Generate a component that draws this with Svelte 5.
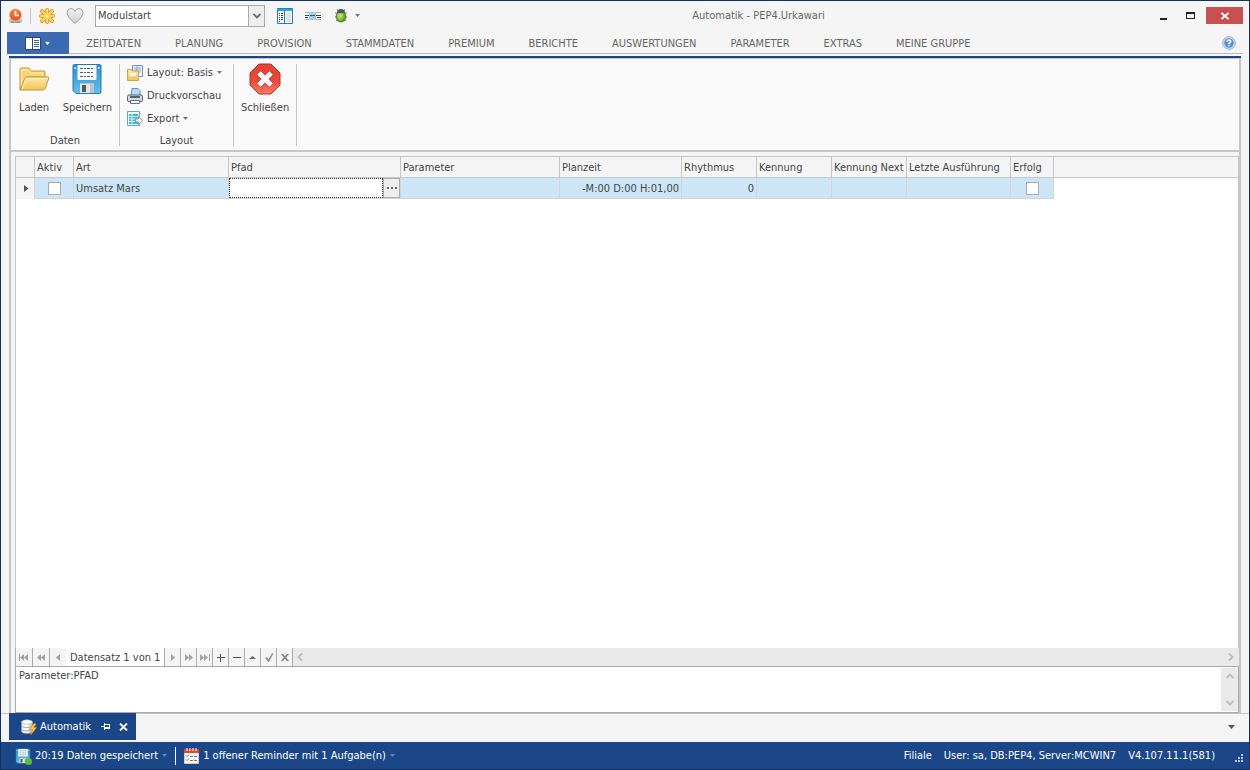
<script>
  const tabs = ['ZEITDATEN', 'PLANUNG', 'PROVISION', 'STAMMDATEN', 'PREMIUM', 'BERICHTE', 'AUSWERTUNGEN', 'PARAMETER', 'EXTRAS', 'MEINE GRUPPE'];
  const columns = [
    { title: 'Aktiv', width: 39 },
    { title: 'Art', width: 155 },
    { title: 'Pfad', width: 172 },
    { title: 'Parameter', width: 159 },
    { title: 'Planzeit', width: 122 },
    { title: 'Rhythmus', width: 75 },
    { title: 'Kennung', width: 75 },
    { title: 'Kennung Next', width: 75 },
    { title: 'Letzte Ausführung', width: 104 },
    { title: 'Erfolg', width: 43 }
  ];
  const before = [
    { label: 'Erster', d: 'M0 1h1v7H0zM5 1v7L1 4.500zM9 1v7L5 4.500z' },
    { label: 'Seite zurück', d: 'M5 1v7L1 4.500zM9 1v7L5 4.500z' },
    { label: 'Zurück', d: 'M7 1v7L3 4.500z' }
  ];
  const after = [
    { label: 'Weiter', d: 'M3 1v7l4-3.500z' },
    { label: 'Seite vor', d: 'M1 1v7l4-3.500zM5 1v7l4-3.500z' },
    { label: 'Letzter', d: 'M0 1v7l4-3.500zM4 1v7l4-3.500zM9 1h1v7H9z' },
    { label: 'Hinzufügen', d: 'M4 1h1v3h4v1H5v4H4V5H1V4h3z', fill: '#555' },
    { label: 'Löschen', d: 'M1 4h8v1H1z', fill: '#555' },
    { label: 'Bearbeiten', d: 'M1 6h7L4.500 3z', fill: '#666' },
    { label: 'Übernehmen', d: 'M1 5l2-1 1.500 2L8 0l1.500.5L5 9H4z', fill: '#999' },
    { label: 'Verwerfen', d: 'M1 1h2l2 2.200L7 1h2L6.200 4.500 9 8H7L5 5.800 3 8H1l2.800-3.500z', fill: '#858585' }
  ];
  let active = $state(false);
  let success = $state(false);
  let path = $state('');
</script>

{#snippet arrow()}
  <svg class="arrow" width="5" height="3" viewBox="0 0 5 3" aria-hidden="true"><path d="M0 0h5L2.500 3z" fill="currentColor" /></svg>
{/snippet}

{#snippet floppy(size)}
  <svg width={size} height={size} viewBox="0 0 32 32" aria-hidden="true">
    <path d="M2 3q0-1.500 1.500-1.500h25Q30 1.500 30 3v26q0 1.500-1.500 1.500H5l-3-3z" fill="url(#disk)" stroke="#2479ae" />
    <path d="M6.500 2h19v14q0 1-1 1h-17q-1 0-1-1z" fill="#f7f9fa" />
    <path d="M3.500 4h1.500v2H3.500zM27 4h1.500v2H27z" fill="#dff2fc" />
    <path d="M9 5.500h14M9 9.500h14M9 13.500h14" stroke="#56646d" stroke-dasharray="3 1 2 1" />
    <path d="M9 20.500h14V30H9z" fill="#dfe5e9" />
    <path d="M11 22h4v7h-4z" fill="#4e5a66" />
    <path d="M19 20.500h4V30h-4z" fill="#b9c6ce" />
  </svg>
{/snippet}

<svg class="defs" width="0" height="0" aria-hidden="true">
  <defs>
    <linearGradient id="disk" x1="0" y1="0" x2="0" y2="1"><stop offset="0" stop-color="#2f8fc9" /><stop offset="1" stop-color="#62c0ec" /></linearGradient>
    <linearGradient id="folder" x1="0" y1="0" x2="0" y2="1"><stop offset="0" stop-color="#ffeaa5" /><stop offset="1" stop-color="#f0c45c" /></linearGradient>
    <linearGradient id="stop" x1="0" y1="0" x2="0" y2="1"><stop offset="0" stop-color="#e04434" /><stop offset=".55" stop-color="#e64a38" /><stop offset="1" stop-color="#ff7a68" /></linearGradient>
    <linearGradient id="heart" x1="0" y1="0" x2="0" y2="1"><stop offset="0" stop-color="#f4f4f4" /><stop offset="1" stop-color="#cdcdcd" /></linearGradient>
    <linearGradient id="silver" x1="0" y1="0" x2="1" y2="0"><stop offset="0" stop-color="#e9edf0" /><stop offset=".5" stop-color="#fff" /><stop offset="1" stop-color="#aeb9c2" /></linearGradient>
    <radialGradient id="bug" cx=".4" cy=".45"><stop offset="0" stop-color="#d3f07a" /><stop offset="1" stop-color="#6aa31c" /></radialGradient>
    <radialGradient id="clock" cx=".5" cy=".35"><stop offset="0" stop-color="#ff8c45" /><stop offset="1" stop-color="#e0571c" /></radialGradient>
  </defs>
</svg>

<div class="window">
  <header class="titlebar">
    <div class="quick">
      <button class="tool" aria-label="Anwendung">
        <svg width="16" height="16" viewBox="0 0 16 16"><path d="M1 11h13v3q0 1-1 1H2q-1 0-1-1z" fill="#c4c4c4" /><path d="M3 13.500h9v1H3z" fill="#777" /><circle cx="7.500" cy="7" r="6" fill="url(#clock)" stroke="#e8b59a" /><path d="M7.500 3v4.500H11" fill="none" stroke="#fff" stroke-width="1.600" /></svg>
      </button>
      <span class="split"></span>
      <button class="tool" aria-label="Neu">
        <svg width="18" height="18" viewBox="0 0 18 18"><g stroke-linecap="round"><path d="M9 3v12M3 9h12M4 4l10 10M14 4L4 14" stroke="#dc982b" stroke-width="4" /><path d="M9 3v12M3 9h12M4 4l10 10M14 4L4 14" stroke="#ffd268" stroke-width="2.400" /></g><circle cx="9" cy="9" r="1.500" fill="#fff0a9" /></svg>
      </button>
      <button class="tool" aria-label="Favorit">
        <svg width="18" height="18" viewBox="0 0 18 18"><path d="M9 16.500Q1 10 1 5.500Q1.200 1.500 5 1.500Q8 1.500 9 4.500Q10 1.500 13 1.500Q16.800 1.500 17 5.500Q17 10 9 16.500z" fill="url(#heart)" stroke="#a6a6a6" /></svg>
      </button>
      <div class="combo">
        <select aria-label="Modul"><option>Modulstart</option></select>
        <span class="drop"><svg width="8" height="6" viewBox="0 0 8 6"><path d="M.5 1L4 4.500 7.500 1" fill="none" stroke="#6b6b6b" stroke-width="1.800" /></svg></span>
      </div>
      <button class="tool" aria-label="Ansicht">
        <svg width="16" height="16" viewBox="0 0 16 16"><path d="M.5.5h15v15H.5z" fill="#fff" stroke="#1782c0" /><path d="M1 1h14v2H1z" fill="#36a2dc" /><path d="M2 5h1v1H2zM2 7h1v1H2zM2 9h1v1H2zM2 11h1v1H2zM2 13h1v1H2zM4 5h2v1H4zM4 7h2v1H4zM4 9h2v1H4zM4 11h2v1H4z" fill="#444" /><path d="M7 3h1v12H7z" fill="#1782c0" /><path d="M9 5h5v9H9z" fill="#e2e2e2" /></svg>
      </button>
      <button class="tool" aria-label="Trennen">
        <svg width="16" height="8" viewBox="0 0 16 8"><path d="M0 0h16v1H0zM0 7h16v1H0z" fill="#b5b5b5" /><path d="M4 0h7v8H4z" fill="#a5cbe4" /><path d="M0 3h4v1H0zM11 3h5v1h-5zM0 5h3v1H0zM12 5h4v1h-4z" fill="#444" /><path d="M5 3h5v1H5z" fill="#28577a" /></svg>
      </button>
      <button class="tool bug" aria-label="Debug">
        <svg width="12" height="15" viewBox="0 0 12 15"><path d="M0 5h12M0 9h12M1 12.500h10M2 1l2 3M10 1L8 4" stroke="#65734c" stroke-width=".8" /><ellipse cx="6" cy="8.500" rx="4.800" ry="5.500" fill="url(#bug)" stroke="#426a13" stroke-width=".8" /><path d="M2 5Q2 1 6 1t4 4z" fill="#475675" /></svg>
        {@render arrow()}
      </button>
    </div>
    <h1>Automatik - PEP4.Urkawari</h1>
    <div class="controls">
      <button aria-label="Minimieren"><svg width="9" height="9" viewBox="0 0 9 9"><path d="M1 7h7v2H1z" fill="#222" /></svg></button>
      <button aria-label="Maximieren"><svg width="9" height="9" viewBox="0 0 9 9"><path d="M0 1h9v7H0zM1 3v4h7V3z" fill="#222" fill-rule="evenodd" /></svg></button>
      <button class="close" aria-label="Fenster schließen"><svg width="8" height="8" viewBox="0 0 8 8"><path d="M.5 1l7 6M7.500 1l-7 6" stroke="#fff" stroke-width="1.800" /></svg></button>
    </div>
  </header>

  <nav class="tabs">
    <button class="file" aria-label="Datei">
      <svg width="16" height="13" viewBox="0 0 16 13"><path d="M.5.5h15v12H.5z" fill="#fff" stroke="#24457e" /><path d="M7 1h1v11H7z" fill="#24457e" /><path d="M9 3h5v1H9zM9 5h5v1H9zM9 7h5v1H9zM9 9h5v1H9z" fill="#4a5f86" /></svg>
      <svg width="7" height="5" viewBox="0 0 7 5"><path d="M.5.5h6L3.500 4.500z" fill="#fff" stroke="#24457e" stroke-width=".5" /></svg>
    </button>
    {#each tabs as tab}<button class="tab">{tab}</button>{/each}
    <button class="help" aria-label="Hilfe">
      <svg width="14" height="14" viewBox="0 0 14 14"><circle cx="7" cy="7" r="6.300" fill="#dbe7f5" stroke="#8fabd0" /><circle cx="7" cy="7" r="4.800" fill="#5d8fce" /><path d="M5.200 5.800Q5.200 4 7 4t1.800 1.600Q8.800 6.600 7 7.500v.8M7 9v1.300" fill="none" stroke="#fff" stroke-width="1.400" /></svg>
    </button>
  </nav>

  <div class="shell">
    <section class="ribbon">
      <div class="group data">
        <div class="items">
          <button class="big">
            <svg width="32" height="32" viewBox="0 0 32 32"><path d="M2 27V6q0-1 1-1h8l2 3h13q1 0 1 1v5H9z" fill="#f7d47b" stroke="#c99632" /><path d="M3.500 24V7h7l2 3h12v3" fill="none" stroke="#fff0bd" /><path d="M2 27l5-12q.5-1 1.500-1H30q1.200 0 .8 1L27 26q-.5 1-1.500 1z" fill="url(#folder)" stroke="#c99632" /><path d="M4 26l4.200-10.500H30" fill="none" stroke="#fff3c8" /></svg>
            <span>Laden</span>
          </button>
          <button class="big">
            {@render floppy(32)}
            <span>Speichern</span>
          </button>
        </div>
        <h2>Daten</h2>
      </div>
      <div class="group layout">
        <div class="stack">
          <button>
            <svg width="16" height="16" viewBox="0 0 16 16"><path d="M5.500.5h10v11h-10z" fill="#edf4fb" stroke="#7496bd" /><path d="M7 3h7M7 5h7M7 7h7M10 1v10" stroke="#8cabd0" /><path d="M.5 15.500v-11h4l1 1.500h6v9.500z" fill="url(#folder)" stroke="#d2a344" /><path d="M3 8h6v3H3z" fill="#fff" /></svg>
            <span>Layout: Basis</span>{@render arrow()}
          </button>
          <button>
            <svg width="16" height="16" viewBox="0 0 16 16"><path d="M4 8L5 .5h6l2 2V8z" fill="#b8daf7" stroke="#5d8fc2" /><path d="M.5 8.500q0-1.500 1.500-1.500h12q1.500 0 1.500 1.500v4q0 1-1 1h-13q-1 0-1-1z" fill="#d5dae0" stroke="#56606c" /><path d="M3 8h10v2H3z" fill="#59626e" /><path d="M3.500 12.500h9v3h-9z" fill="#fff" stroke="#68727e" /></svg>
            <span>Druckvorschau</span>
          </button>
          <button>
            <svg width="16" height="16" viewBox="0 0 16 16"><path d="M.5.5h12v14H.5z" fill="#f5fcff" stroke="#67a8b8" /><path d="M2 3h9v10H2z" fill="#38b5e5" /><path d="M2 5.500h9M2 8h9M2 10.500h9M5 3v10" stroke="#d8f4ff" /><path d="M8.500 8h3V5.500L15.500 9.500l-4 4V11h-3z" fill="#f5f5f5" stroke="#8d9a9d" /></svg>
            <span>Export</span>{@render arrow()}
          </button>
        </div>
        <h2>Layout</h2>
      </div>
      <div class="group">
        <div class="items">
          <button class="big">
            <svg width="32" height="32" viewBox="0 0 32 32"><path d="M10 1h12l9 9v12l-9 9H10l-9-9V10z" fill="url(#stop)" stroke="#b43428" /><path d="M10 10l12 12m0-12L10 22" stroke="#b8382b" stroke-width="6.500" /><path d="M10 10l12 12m0-12L10 22" stroke="#fff" stroke-width="5" /></svg>
            <span>Schließen</span>
          </button>
        </div>
      </div>
    </section>

    <main>
      <div class="grid">
        <table>
          <colgroup>
            <col style="width:19px" />
            {#each columns as column}<col style="width:{column.width}px" />{/each}
            <col />
          </colgroup>
          <thead>
            <tr><th></th>{#each columns as column}<th>{column.title}</th>{/each}<th></th></tr>
          </thead>
          <tbody>
            <tr>
              <td class="marker"><svg width="5" height="7" viewBox="0 0 5 7"><path d="M0 0v7l4.500-3.500z" fill="#555" /></svg></td>
              <td class="check"><input type="checkbox" aria-label="Aktiv" bind:checked={active} /></td>
              <td>Umsatz Mars</td>
              <td class="editor"><div class="edit"><input type="text" aria-label="Pfad" bind:value={path} /><button aria-label="Pfad wählen"><svg width="10" height="2" viewBox="0 0 10 2"><path d="M0 0h2v2H0zM4 0h2v2H4zM8 0h2v2H8z" fill="#666" /></svg></button></div></td>
              <td></td>
              <td class="number">-M:00 D:00 H:01,00</td>
              <td class="number">0</td>
              <td></td><td></td><td></td>
              <td class="check"><input type="checkbox" aria-label="Erfolg" bind:checked={success} /></td>
              <td class="rest"></td>
            </tr>
          </tbody>
        </table>
      </div>
      <div class="navigator">
        {#each before as item}
          <button aria-label={item.label}><svg width="10" height="9" viewBox="0 0 10 9"><path d={item.d} fill="#a3a3a3" /></svg></button>
        {/each}
        <span class="record">Datensatz 1 von 1</span>
        {#each after as item}
          <button class="next" aria-label={item.label}><svg width="10" height="9" viewBox="0 0 10 9"><path d={item.d} fill={item.fill ?? '#a3a3a3'} /></svg></button>
        {/each}
        <div class="scroll">
          <svg width="6" height="8" viewBox="0 0 6 8"><path d="M5 .5L1.500 4 5 7.500" /></svg>
          <svg width="6" height="8" viewBox="0 0 6 8"><path d="M1 .5L4.500 4 1 7.500" /></svg>
        </div>
      </div>
      <div class="memo">
        <p>Parameter:PFAD</p>
        <div class="vscroll">
          <svg width="8" height="6" viewBox="0 0 8 6"><path d="M.5 5L4 1.500 7.500 5" /></svg>
          <svg width="8" height="6" viewBox="0 0 8 6"><path d="M.5 1L4 4.500 7.500 1" /></svg>
        </div>
      </div>
    </main>
  </div>

  <div class="documents">
    <div class="document">
      <svg width="16" height="16" viewBox="0 0 16 16"><path d="M.5 3v9q0 2.500 5.500 2.500t5.500-2.500V3z" fill="url(#silver)" stroke="#8a98a8" stroke-width=".6" /><ellipse cx="6" cy="3" rx="5.500" ry="2.200" fill="#fff" stroke="#9ca9b6" stroke-width=".6" /><path d="M.5 6.500Q1 8.500 6 8.500t5.500-2M.5 10Q1 12 6 12t5.500-2" fill="none" stroke="#a0adb9" /><path d="M13 4.500l-4.500 6h3L10 15.500l5.500-7h-3L15 5z" fill="#ffd43c" stroke="#e88916" stroke-width=".8" /></svg>
      <span>Automatik</span>
      <button class="pin" aria-label="Anheften"><svg width="9" height="7" viewBox="0 0 9 7"><path d="M0 3h3V0h1v1h5v5H4v1H3V4H0zM4 2v2h4V2z" fill="#fff" fill-rule="evenodd" /></svg></button>
      <button aria-label="Schließen"><svg width="9" height="8" viewBox="0 0 9 8"><path d="M1 .5l7 7M8 .5l-7 7" stroke="#fff" stroke-width="1.800" /></svg></button>
    </div>
    <button aria-label="Fensterliste"><svg width="7" height="4" viewBox="0 0 7 4"><path d="M0 0h7L3.500 4z" fill="#555" /></svg></button>
  </div>

  <footer>
    <button class="saved">
      <span class="saveicon">{@render floppy(16)}<i></i></span>
      <span>20:19 Daten gespeichert</span>{@render arrow()}
    </button>
    <button class="reminder">
      <svg width="15" height="16" viewBox="0 0 15 16"><path d="M.5 1.500h14v14H.5z" fill="#fafafa" stroke="#ccc" /><path d="M0 1h15v4H0z" fill="#d84a35" /><path d="M3 0v3M6 0v3M9 0v3M12 0v3" stroke="#fff" /><path d="M2 7.500l1 1 2-2M2 11.500l1 1 2-2" fill="none" stroke="#5b9b30" /><path d="M6 8.500h3M10 8.500h3M6 12.500h3M10 12.500h3" stroke="#777" /></svg>
      <span>1 offener Reminder mit 1 Aufgabe(n)</span>{@render arrow()}
    </button>
    <div class="info"><span>Filiale</span><span>User: sa, DB:PEP4, Server:MCWIN7</span><span>V4.107.11.1(581)</span></div>
    <svg class="grip" width="8" height="8" viewBox="0 0 8 8" aria-hidden="true"><path d="M6 0h2v2H6zM3 3h2v2H3zM6 3h2v2H6zM0 6h2v2H0zM3 6h2v2H3zM6 6h2v2H6z" fill="#b8c7dd" /></svg>
  </footer>
</div>

<style>
  :global(body) { margin: 0; }
  .window, .window * { box-sizing: border-box; }
  .window {
    display: flex;
    flex-direction: column;
    min-height: 100vh;
    border: 1px solid #14305f;
    background: #f5f5f5;
    color: #444;
    font: 11px/14px "DejaVu Sans Condensed", "Noto Sans", sans-serif;
  }
  svg { display: block; flex: none; }
  .defs { position: absolute; }
  button { display: flex; align-items: center; padding: 0; border: 0; background: none; color: inherit; font: inherit; white-space: nowrap; }
  h1, h2, p { margin: 0; font: inherit; }

  .titlebar { display: flex; align-items: center; height: 31px; padding: 0 6px 2px 5px; }
  .quick { display: flex; align-items: center; }
  .tool { justify-content: center; width: 28px; height: 24px; }
  .tool:first-child { width: 20px; }
  .split { width: 1px; height: 16px; margin: 0 2px 0 4px; background: #c6c6c6; }
  .combo { display: flex; width: 170px; height: 22px; margin: 0 6px; border: 1px solid #ababab; background: #fff; }
  select { flex: 1; min-width: 0; padding: 0 2px; border: 0; appearance: none; background: #fff; color: #444; font: inherit; }
  .drop { display: flex; align-items: center; justify-content: center; width: 16px; border-left: 1px solid #ababab; background: #eee; pointer-events: none; }
  .tool.bug { gap: 8px; width: 40px; }
  .arrow { color: #777; }
  h1 { flex: 1; color: #666; text-align: center; }
  .controls { display: flex; align-items: center; }
  .controls button { justify-content: center; width: 27px; height: 17px; }
  .controls .close { width: 37px; margin-left: 2px; background: #c75050; }

  .tabs { display: flex; align-items: stretch; height: 22px; margin: 0 6px; border-bottom: 1px solid #bdbdbd; color: #666; }
  .file { justify-content: center; gap: 3px; width: 62px; height: 22px; background: #3d6bb3; }
  .tab { padding: 2px 17px 0; }
  .help { margin-left: auto; padding-right: 7px; }

  .shell { display: flex; flex: 1; flex-direction: column; margin: 2px 8px 0; border: 2px solid #c6c6c6; border-width: 0 2px; }
  .ribbon { display: flex; height: 96px; margin: 0 -2px; padding: 5px 0 4px 2px; border-bottom: 2px solid #c6c6c6; box-shadow: inset 0 2px #1b4788, inset 0 3px #c6c6c6, inset 2px 0 #c6c6c6, inset -2px 0 #c6c6c6; background: #fafafa; }
  .group { display: flex; flex-direction: column; justify-content: space-between; margin-top: 3px; padding: 0 7px; border-right: 1px solid #c6c6c6; }
  .items { display: flex; justify-content: space-between; margin-top: -1px; }
  .big { flex-direction: column; gap: 6px; }
  .data { width: 109px; }
  .layout { width: 114px; }
  h2 { line-height: 10px; text-align: center; }
  .stack { display: flex; flex-direction: column; margin-top: -3px; }
  .stack button { gap: 4px; height: 23px; }

  main { display: flex; flex: 1; flex-direction: column; padding: 4px 0 0 4px; }
  .grid { flex: 1; border: 1px solid #c6c6c6; border-width: 1px 1px 0; background: #fff; }
  table { width: 100%; table-layout: fixed; border-spacing: 0; }
  th, td { height: 21px; padding: 1px 2px 0; border-right: 1px solid #c6c6c6; border-bottom: 1px solid #c6c6c6; font-weight: normal; text-align: left; white-space: nowrap; }
  th { background: #f5f5f5; }
  th:last-child { border-right: 0; }
  td { border-color: #d4d4d4; background: #cde6f7; }
  .marker { padding-left: 8px; border-bottom-color: #f5f5f5; background: #f5f5f5; }
  .check { padding: 0 2px; }
  .check input { display: block; width: 13px; height: 13px; margin: 0 auto; border: 1px solid #ababab; appearance: none; background: #fff; }
  .number { text-align: right; }
  .rest { border: 0; background: #fff; }
  .editor { padding: 0; }
  .edit { display: flex; height: 20px; }
  .edit input { flex: 1; min-width: 0; padding: 0 2px; border: 1px dotted #333; outline: 0; background: #fff; font: inherit; }
  .edit button { justify-content: center; width: 17px; border: 1px solid #ababab; background: #eee; }

  .navigator { display: flex; height: 18px; border-left: 1px solid #ababab; background: #eaeaea; }
  .navigator button { justify-content: center; width: 17px; border-right: 1px solid #ababab; background: #f5f5f5; }
  .navigator .next { width: 16px; }
  .navigator button:has(+ .record) { width: 16px; border: 0; }
  .record { padding: 3px 4px 0; border-right: 1px solid #ababab; background: #fff; }
  .scroll { display: flex; flex: 1; align-items: center; justify-content: space-between; padding: 0 5px 0 4px; }
  .scroll path, .vscroll path { fill: none; stroke: #bdbdbd; stroke-width: 1.8; }
  .memo { display: flex; height: 47px; border: 1px solid #ababab; background: #fff; }
  .memo p { flex: 1; padding: 2px 3px; }
  .vscroll { display: flex; flex-direction: column; align-items: center; justify-content: space-between; width: 17px; margin: 1px 0; padding: 5px 0; background: #eaeaea; }

  .documents { display: flex; align-items: center; justify-content: space-between; height: 29px; padding: 0 14px 2px 8px; box-shadow: inset 0 1px #c6c6c6; }
  .document { display: flex; align-items: center; height: 27px; padding: 0 8px 0 12px; background: #1b4788; color: #fff; }
  .document span { padding-left: 3px; }
  .pin { margin: 0 9px 0 10px; }

  footer { display: flex; align-items: center; height: 27px; padding: 0 6px 0 14px; background: #1b4788; color: #fff; }
  footer button { gap: 4px; }
  footer .arrow { color: #7188aa; }
  .saveicon { position: relative; }
  .saveicon i { position: absolute; right: -1px; bottom: -1px; width: 7px; height: 7px; border-radius: 50%; background: #5fba37; }
  .saved { padding-right: 8px; border-right: 1px solid #fff; height: 18px; }
  .reminder { padding-left: 8px; }
  .info { display: flex; gap: 12px; margin-left: auto; }
  .grip { margin: 4px 0 0 20px; }
</style>
